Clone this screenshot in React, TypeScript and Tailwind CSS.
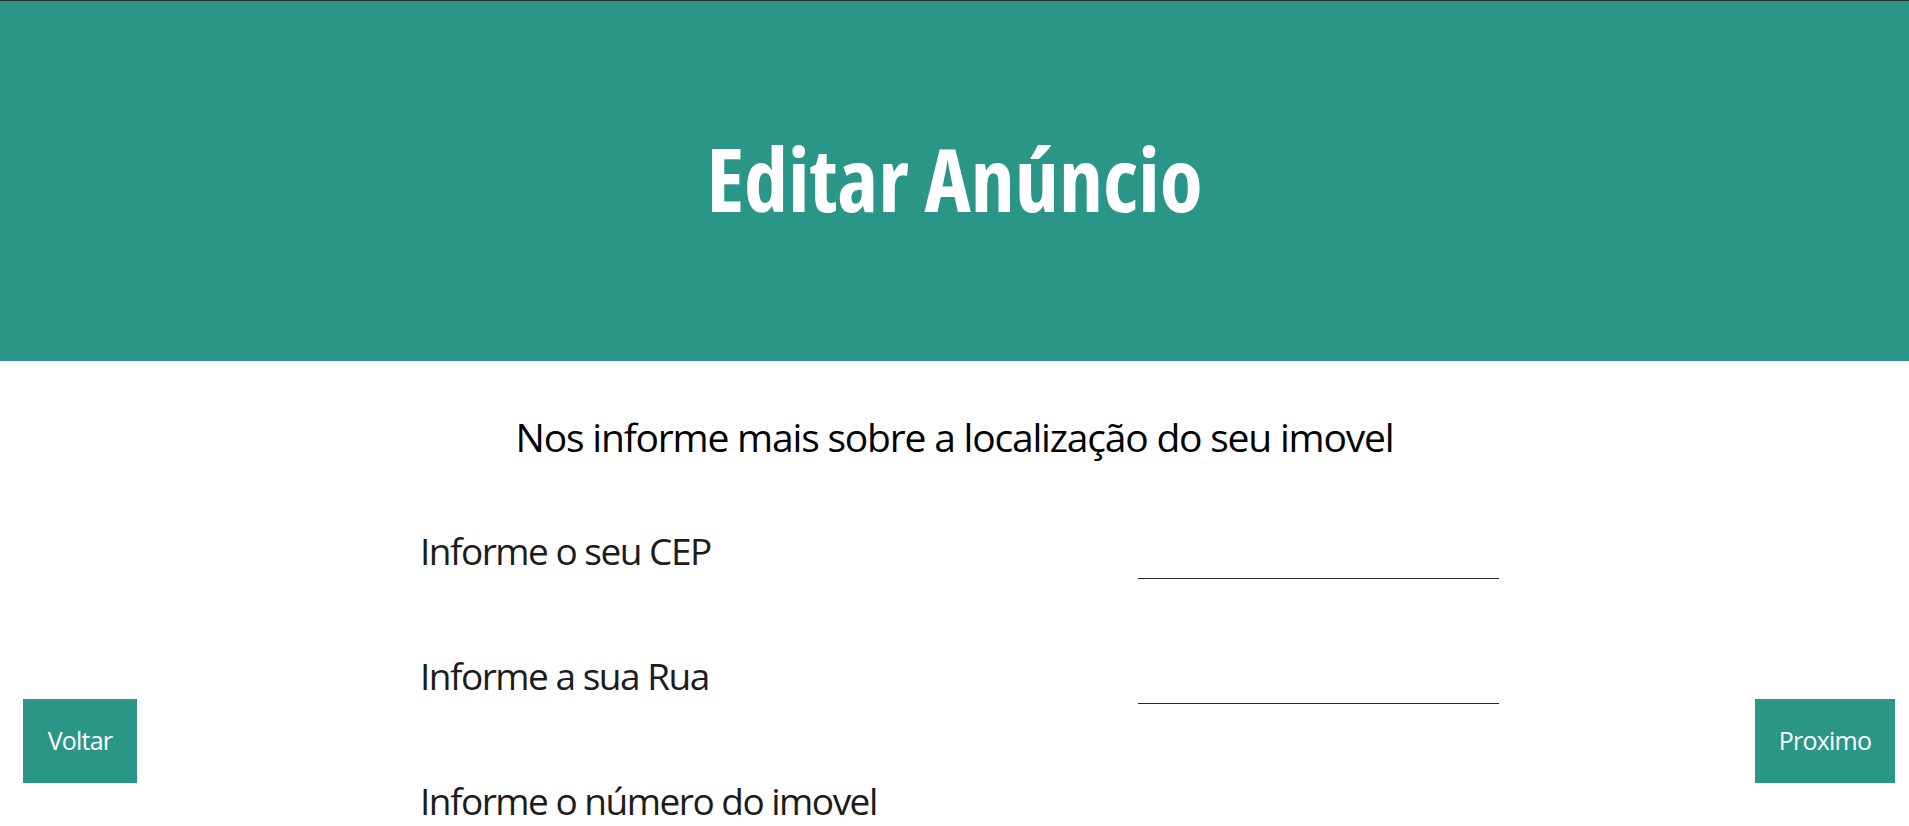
import React from 'react';

const fields = ['Informe o seu CEP', 'Informe a sua Rua', 'Informe o número do imovel'];

const EditarAnuncio = () => {
    return (
        <div className="min-h-screen bg-white font-['Open_Sans','Liberation_Sans',sans-serif] text-[#1c1c1c]">
            <header className="h-[361px] pb-[6px] border-t border-[#2b2b2b] bg-[#2a9688] flex items-center justify-center">
                <h1 className="text-[88px] leading-none font-bold font-stretch-condensed text-white">
                    Editar Anúncio
                </h1>
            </header>

            <main className="pb-40">
                <p className="mt-[56px] text-center text-[39px] leading-none tracking-[-1.2px] text-black">
                    Nos informe mais sobre a localização do seu imovel
                </p>

                <div className="w-[1089px] mx-auto pl-[10px] mt-[76px] flex flex-col gap-[78px]">
                    {fields.map((label) => (
                        <div key={label} className="flex items-end justify-between">
                            <label className="text-[37px] leading-none tracking-[-1.5px] pb-[10px]">{label}</label>
                            <input
                                type="text"
                                className="w-[361px] h-[40px] border-b border-[#2b2b2b] outline-none bg-transparent text-[24px]"
                            />
                        </div>
                    ))}
                </div>
            </main>

            <button className="fixed left-[23px] bottom-[43px] w-[114px] h-[84px] bg-[#2a9688] text-white text-[25px] tracking-[-0.8px]">
                Voltar
            </button>
            <button className="fixed right-[14px] bottom-[43px] w-[140px] h-[84px] bg-[#2a9688] text-white text-[25px] tracking-[-0.8px]">
                Proximo
            </button>
        </div>
    );
};

export default EditarAnuncio;
